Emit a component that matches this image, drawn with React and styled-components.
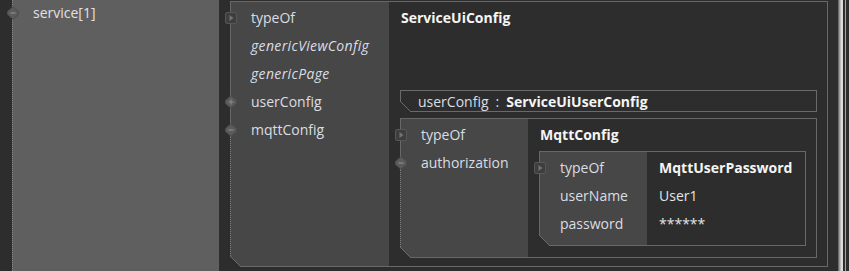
import React from 'react';
import styled, { createGlobalStyle, css } from 'styled-components';

const GlobalStyle = createGlobalStyle`
  html, body {
    margin: 0;
    padding: 0;
    background: #2d2d2d;
  }
  body {
    font-family: "Open Sans", "Liberation Sans", sans-serif;
    font-size: 14px;
    color: #dadde3;
  }
`;

const Page = styled.div`
  display: flex;
  height: 271px;
  padding-left: 12px;
  overflow: hidden;
`;

const ListPanel = styled.div`
  position: relative;
  flex-shrink: 0;
  width: 207px;
  box-sizing: border-box;
  background: #5f5f5f;
  border-left: 1px dotted #858585;
`;

const ListItem = styled.div`
  position: relative;
  height: 26px;
  line-height: 26px;
  padding-left: 20px;
  color: #e2e2e2;
`;

const Editor = styled.div`
  flex-shrink: 0;
  width: 598px;
  margin: 1px 0 0 11px;
`;

const Box = styled.div`
  position: relative;
  display: grid;
  grid-template-columns: ${p => p.$labelWidth}px 1fr;
  align-content: start;
  border: 1px solid #686868;
  padding: 2px 0 ${p => p.$pb}px;
  margin-top: ${p => p.$mt || 0}px;
  background: linear-gradient(to right, #474747 ${p => p.$labelWidth}px, #2d2d2d ${p => p.$labelWidth}px);

  ${p => p.$dotFrom != null && css`
    &::before {
      content: '';
      position: absolute;
      left: -1px;
      top: ${p.$dotFrom}px;
      bottom: 0;
      width: 0;
      background: #474747;
      border-left: 1px dotted #7c7c7c;
    }
  `}

  &::after {
    content: '';
    position: absolute;
    left: -1px;
    bottom: -1px;
    width: 11px;
    height: 11px;
    background: linear-gradient(to top right, #2d2d2d 46%, #6a6a6a 47%, #6a6a6a 53%, transparent 54%);
  }
`;

const Label = styled.div`
  position: relative;
  line-height: 28px;
  padding-left: 20px;
  white-space: nowrap;
  font-style: ${p => (p.$italic ? 'italic' : 'normal')};
  letter-spacing: ${p => (p.$italic ? '0.35px' : 'normal')};
`;

const Value = styled.div`
  line-height: 28px;
  padding: 0 10px 0 12px;
  white-space: nowrap;
  font-weight: ${p => (p.$strong ? 700 : 400)};
  color: ${p => (p.$strong ? '#f5f5f5' : '#e4e4e4')};
`;

const Slot = styled.div`
  padding: 0 10px 0 11px;
  min-width: 0;
`;

const Collapsed = styled.div`
  position: relative;
  height: 22px;
  box-sizing: border-box;
  margin-top: 2px;
  border: 1px solid #6a6a6a;
  display: flex;
  align-items: center;
  gap: 7px;
  padding-left: 17px;
  white-space: nowrap;

  &::after {
    content: '';
    position: absolute;
    left: -1px;
    bottom: -1px;
    width: 11px;
    height: 11px;
    background: linear-gradient(to top right, #2d2d2d 46%, #6a6a6a 47%, #6a6a6a 53%, transparent 54%);
  }
`;

const TypeName = styled.span`
  font-weight: 700;
  color: #f5f5f5;
`;

const IconSlot = styled.span`
  position: absolute;
  left: -7px;
  top: ${p => p.$top}px;
  width: 14px;
  height: 14px;
  display: block;
  line-height: 0;
`;

const ScrollEdge = styled.div`
  flex-shrink: 0;
  width: 9px;
  margin-left: 10px;
  background: linear-gradient(to right,
    #6b6b6b 0 1px, #999 1px 2px, #bcbcbc 2px 3px, #dadada 3px 5px,
    #2d2d2d 5px 7px, #a5a5a5 7px 8px, #2d2d2d 8px);
`;

function Toggle({ kind, top = 7 }) {
  return (
    <IconSlot $top={top}>
      <svg width="14" height="14" viewBox="0 0 14 14">
        {kind === 'play' ? (
          <>
            <rect x="1.5" y="1.5" width="11" height="11" rx="1.5" fill="#3e3e3e" stroke="#575757" />
            <path d="M5.5 4 L9.5 7 L5.5 10 Z" fill="#727272" />
          </>
        ) : (
          <>
            <path d="M7 0.8 L12.5 5.5 L12.5 8.5 L7 13.2 L1.5 8.5 L1.5 5.5 Z" fill="#5b5b5b" stroke="#4c4c4c" />
            <path d="M4.5 7 H9.5" stroke="#808080" strokeWidth="1.6" />
            {kind === 'plus' && <path d="M7 4.5 V9.5" stroke="#808080" strokeWidth="1.6" />}
          </>
        )}
      </svg>
    </IconSlot>
  );
}

const serviceConfig = {
  labelWidth: 158,
  pb: 8,
  rows: [
    { name: 'typeOf', icon: 'play', value: 'ServiceUiConfig', strong: true },
    { name: 'genericViewConfig', italic: true },
    { name: 'genericPage', italic: true },
    { name: 'userConfig', icon: 'plus', collapsed: 'ServiceUiUserConfig' },
    {
      name: 'mqttConfig',
      icon: 'minus',
      child: {
        labelWidth: 127,
        pb: 11,
        rows: [
          { name: 'typeOf', icon: 'play', value: 'MqttConfig', strong: true },
          {
            name: 'authorization',
            icon: 'minus',
            child: {
              labelWidth: 107,
              pb: 7,
              rows: [
                { name: 'typeOf', icon: 'play', value: 'MqttUserPassword', strong: true },
                { name: 'userName', value: 'User1' },
                { name: 'password', value: '******' },
              ],
            },
          },
        ],
      },
    },
  ],
};

function ObjectBox({ node, mt }) {
  const openIndex = node.rows.findIndex(r => r.child);
  const dotFrom = openIndex >= 0 ? 2 + openIndex * 28 + 20 : null;

  return (
    <Box $labelWidth={node.labelWidth} $pb={node.pb} $mt={mt} $dotFrom={dotFrom}>
      {node.rows.map(row => (
        <React.Fragment key={row.name}>
          <Label $italic={row.italic}>
            {row.icon && <Toggle kind={row.icon} />}
            {row.name}
          </Label>
          {row.child ? (
            <Slot>
              <ObjectBox node={row.child} mt={2} />
            </Slot>
          ) : row.collapsed ? (
            <Slot>
              <Collapsed>
                <span>{row.name}</span>
                <span>:</span>
                <TypeName>{row.collapsed}</TypeName>
              </Collapsed>
            </Slot>
          ) : (
            <Value $strong={row.strong}>{row.value}</Value>
          )}
        </React.Fragment>
      ))}
    </Box>
  );
}

export default function App() {
  return (
    <>
      <GlobalStyle />
      <Page>
        <ListPanel>
          <ListItem>
            <Toggle kind="minus" top={6} />
            service[1]
          </ListItem>
        </ListPanel>
        <Editor>
          <ObjectBox node={serviceConfig} />
        </Editor>
        <ScrollEdge />
      </Page>
    </>
  );
}
